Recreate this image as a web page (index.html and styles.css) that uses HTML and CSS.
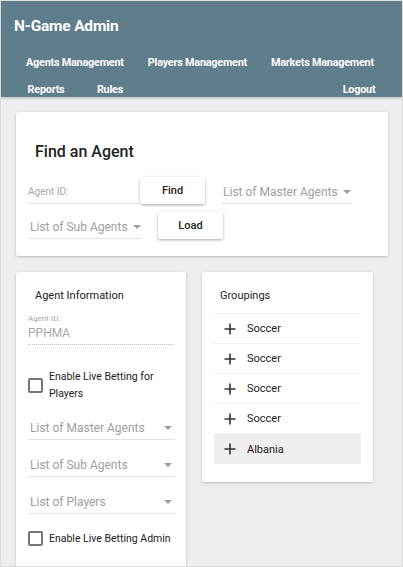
FILE: index.html
```html
<!DOCTYPE html>
<html>
<head>
<meta charset="utf-8">
<link rel="stylesheet" href="styles.css">
</head>
<body>
<div class="frame">
  <header class="topbar">
    <div class="brand">N-Game Admin</div>
    <nav class="nav-row">
      <a class="nav-btn">Agents Management</a>
      <a class="nav-btn">Players Management</a>
      <a class="nav-btn">Markets Management</a>
    </nav>
    <nav class="nav-row nav-row2">
      <a class="nav-btn">Reports</a>
      <a class="nav-btn">Rules</a>
      <span class="spacer"></span>
      <a class="nav-btn">Logout</a>
    </nav>
  </header>

  <main class="content">
    <section class="card find-card">
      <h2 class="card-title">Find an Agent</h2>
      <div class="field-row">
        <div class="text-field w110"><span class="placeholder">Agent ID:</span></div>
        <button class="raised-btn btn-find">Find</button>
        <div class="select-field w131 ml16"><span>List of Master Agents</span><span class="caret"></span></div>
      </div>
      <div class="field-row row2">
        <div class="select-field w114"><span>List of Sub Agents</span><span class="caret"></span></div>
        <button class="raised-btn btn-load">Load</button>
      </div>
    </section>

    <div class="columns">
      <section class="card info-card">
        <div class="small-title indent">Agent Information</div>
        <div class="readonly-field">
          <div class="tiny-label">Agent ID:</div>
          <div class="ro-value">PPHMA</div>
        </div>
        <label class="check-row check1">
          <span class="box"></span>
          <span class="check-text">Enable Live Betting for Players</span>
        </label>
        <div class="select-field full sel-a"><span>List of Master Agents</span><span class="caret"></span></div>
        <div class="select-field full sel-b"><span>List of Sub Agents</span><span class="caret"></span></div>
        <div class="select-field full sel-b"><span>List of Players</span><span class="caret"></span></div>
        <label class="check-row check2">
          <span class="box"></span>
          <span class="check-text nowrap">Enable Live Betting Admin</span>
        </label>
      </section>

      <section class="card group-card">
        <div class="small-title indent6">Groupings</div>
        <ul class="group-list">
          <li class="group-item"><svg class="plus" viewBox="0 0 12 12"><path d="M6 0.5V11.5M0.5 6H11.5" stroke="#333" stroke-width="1.6" fill="none"/></svg><span>Soccer</span></li>
          <li class="group-item"><svg class="plus" viewBox="0 0 12 12"><path d="M6 0.5V11.5M0.5 6H11.5" stroke="#333" stroke-width="1.6" fill="none"/></svg><span>Soccer</span></li>
          <li class="group-item"><svg class="plus" viewBox="0 0 12 12"><path d="M6 0.5V11.5M0.5 6H11.5" stroke="#333" stroke-width="1.6" fill="none"/></svg><span>Soccer</span></li>
          <li class="group-item"><svg class="plus" viewBox="0 0 12 12"><path d="M6 0.5V11.5M0.5 6H11.5" stroke="#333" stroke-width="1.6" fill="none"/></svg><span>Soccer</span></li>
          <li class="group-item active"><svg class="plus" viewBox="0 0 12 12"><path d="M6 0.5V11.5M0.5 6H11.5" stroke="#333" stroke-width="1.6" fill="none"/></svg><span>Albania</span></li>
        </ul>
      </section>
    </div>
  </main>
</div>
</body>
</html>
```

FILE: styles.css
```css
* { box-sizing: border-box; }
html, body { margin: 0; padding: 0; }
body {
  background: #eeeeee;
  font-family: Roboto, "Noto Sans", Arial, sans-serif;
  color: #222;
}
.frame {
  width: 403px;
  height: 567px;
  border: 1px solid #dcdcdc;
  overflow: hidden;
  background: #eeeeee;
}
.topbar {
  background: #607d8b;
  height: 96px;
  padding: 0 11px 0 13px;
  box-shadow: 0 1px 3px rgba(0,0,0,0.25);
  color: #fff;
  position: relative;
  z-index: 1;
}
.brand {
  font-size: 15.5px;
  font-weight: 700;
  line-height: 20px;
  padding-top: 15px;
  letter-spacing: -0.2px;
  white-space: nowrap;
}
.nav-row {
  display: flex;
  margin-top: 16px;
  height: 22px;
  align-items: center;
  white-space: nowrap;
}
.nav-row2 { margin-top: 5px; }
.nav-btn {
  min-width: 64px;
  padding: 0 12px;
  font-size: 10.8px;
  font-weight: 700;
  text-align: center;
  line-height: 22px;
  letter-spacing: -0.2px;
  color: #fff;
  white-space: nowrap;
}
.spacer { flex: 1; }

.content { padding: 15px 0 0 15px; }
.card {
  background: #fff;
  border-radius: 2px;
  box-shadow: 0 1px 3px rgba(0,0,0,0.22);
}
.find-card {
  width: 372px;
  padding: 28px 12px 17px 12px;
}
.card-title {
  margin: 0 0 13px 7px;
  font-size: 16px;
  font-weight: 500;
  line-height: 24px;
  color: #222;
}
.field-row { display: flex; align-items: flex-start; height: 27px; }
.row2 { margin-top: 8px; }
.w110 { width: 110px; }
.w114 { width: 114px; }
.w131 { width: 131px; }
.ml16 { margin-left: 16px; }
.text-field {
  height: 27px;
  border-bottom: 1px solid #e2e2e2;
  display: flex;
  align-items: center;
  padding-top: 2px;
}
.placeholder { font-size: 10px; color: #a8a8a8; }
.raised-btn {
  border: none;
  background: #fff;
  border-radius: 2px;
  box-shadow: 0 1px 3px rgba(0,0,0,0.35);
  font-family: Roboto, Arial, sans-serif;
  font-size: 11px;
  font-weight: 500;
  color: #222;
  height: 27px;
  width: 65px;
  padding: 0;
}
.btn-find { margin-left: 2px; }
.btn-load { margin-left: 16px; }
.select-field {
  height: 27px;
  border-bottom: 1px solid #e2e2e2;
  display: flex;
  align-items: center;
  padding: 3px 0 0 2px;
  font-size: 12px;
  color: #9e9e9e;
  white-space: nowrap;
}
.caret {
  width: 0; height: 0;
  border-left: 4px solid transparent;
  border-right: 4px solid transparent;
  border-top: 4px solid #9e9e9e;
  margin-left: 5px;
}
.full { width: 147px; }
.full .caret { margin-left: auto; margin-right: 3px; }

.columns {
  display: flex;
  gap: 16px;
  margin-top: 16px;
  align-items: flex-start;
}
.info-card {
  width: 170px;
  height: 320px;
  padding: 17px 12px 0 12px;
}
.small-title {
  font-size: 11px;
  line-height: 14px;
  color: #222;
}
.indent { padding-left: 7px; }
.indent6 { padding-left: 6px; }
.readonly-field {
  margin-top: 11px;
  width: 145px;
  border-bottom: 1px dotted #bdbdbd;
  padding-bottom: 3px;
}
.tiny-label { font-size: 8px; color: #a8a8a8; line-height: 10px; }
.ro-value { font-size: 12px; color: #a8a8a8; line-height: 16px; margin-top: 1px; }
.check-row { display: flex; align-items: center; }
.check1 { margin-top: 23px; }
.box {
  width: 15px; height: 15px;
  border: 2px solid #757575;
  border-radius: 2px;
  flex: none;
}
.check-text {
  font-size: 10.5px;
  line-height: 17px;
  margin-left: 6px;
  color: #222;
}
.check1 .check-text { width: 122px; }
.nowrap { white-space: nowrap; }
.sel-a { margin-top: 11px; }
.sel-b { margin-top: 10px; }
.check2 { margin-top: 16px; }

.group-card {
  width: 171px;
  height: 210px;
  padding: 17px 12px 0 12px;
}
.group-list {
  list-style: none;
  margin: 10px 0 0 0;
  padding: 0;
  border-top: 1px solid #f3f3f3;
}
.group-item {
  height: 30px;
  display: flex;
  align-items: center;
  padding-left: 10px;
  font-size: 11px;
  color: #222;
  border-bottom: 1px solid #f3f3f3;
}
.group-item.active { background: #eeeeee; border-bottom: none; }
.plus { width: 12px; height: 12px; margin-right: 11px; }
```
